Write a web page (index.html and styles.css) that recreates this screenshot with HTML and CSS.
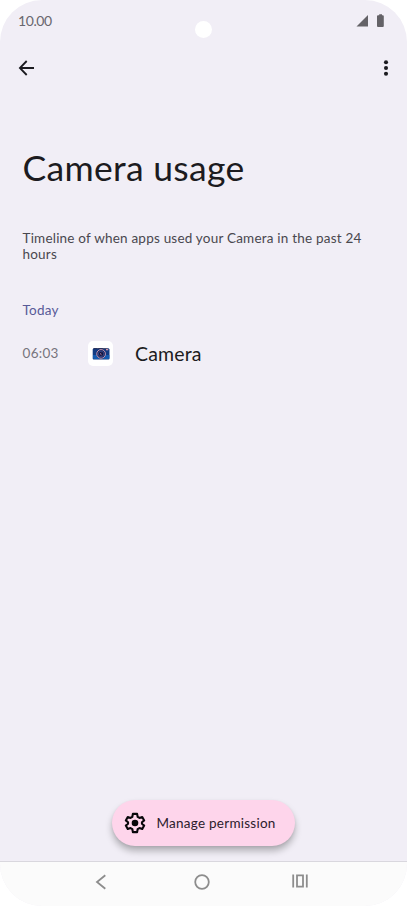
FILE: index.html
```html
<!DOCTYPE html>
<html lang="en">
<head>
<meta charset="utf-8">
<title>Camera usage</title>
<link rel="stylesheet" href="styles.css">
</head>
<body>
<div class="phone">
  <div class="punch-hole"></div>
  <header class="status">
    <span class="clock">10.00</span>
    <svg class="status-icons" width="30" height="14" viewBox="0 0 30 14" fill="#646267"><path d="M12 1v11.500H.5z"/><path d="M23.2 1.200V.3h2.800v.9h.8q1 0 1 1v9.800q0 1-1 1h-4.800q-1 0-1-1V2.200q0-1 1-1z"/></svg>
  </header>
  <nav class="appbar">
    <svg width="18" height="18" viewBox="0 0 18 18" fill="none" stroke="#1c1b20" stroke-width="1.8"><path d="M16 9H2.300M8.700 2 1.900 9l6.800 7"/></svg>
    <svg width="6" height="18" viewBox="0 0 6 18" fill="#1c1b20"><circle cx="3" cy="3.300" r="2.050"/><circle cx="3" cy="9" r="2.050"/><circle cx="3" cy="14.700" r="2.050"/></svg>
  </nav>
  <main class="content">
    <h1 class="title">Camera usage</h1>
    <p class="description"><span class="line-one">Timeline of when apps used your Camera in the past 24</span> <span class="line-two">hours</span></p>
    <h2 class="day">Today</h2>
    <div class="entry">
      <time class="time">06:03</time>
      <span class="app-icon">
        <svg width="18" height="14" viewBox="0 0 18 14"><path d="M.7 2.300 1.700 1.300h3l.8.7L7 1.200h3.400l1 .8H14l.8-.8h1.700l1 1v9.300q0 1-1 1H1.700q-1 0-1-1z" fill="#123b83"/><path d="M1 8h4l3 4H1.700L1 11zM13 8h4.300v3q0 1-1 1H11z" fill="#145bb0"/><path d="M1.500 1.700h14" stroke="#202750"/><circle cx="9.100" cy="6.900" r="4.350" fill="#17245f" stroke="#c796ae"/><circle cx="9.100" cy="6.900" r="2.700" fill="#111641" stroke="#3c5195" stroke-width=".8"/><path d="M9.200 5.800 8.200 7l1.600 1" stroke="#aa7196" stroke-width=".8" fill="none"/><rect x="14" y="1.800" width="2.200" height="1.500" fill="#d399a8"/></svg>
      </span>
      <span class="app-name">Camera</span>
    </div>
  </main>
  <div class="action">
    <button class="manage">
      <svg width="22" height="22" viewBox="0 0 24 24"><path d="M9.700 2h4.600l.6 3.300 2 1.200 3-1 2.100 3.700-2.400 2v1.600l2.400 2-2.100 3.700-3-1-2 1.200-.6 3.300H9.700l-.6-3.300-2-1.200-3 1L2 14.800l2.400-2v-1.600L2 9.200l2.100-3.700 3 1 2-1.200z" fill="none" stroke="#08070a" stroke-width="2.300" stroke-linejoin="round"/><circle cx="12" cy="12" r="3.600" fill="#08070a"/></svg>
      <span class="manage-label">Manage permission</span>
    </button>
  </div>
  <footer class="system-nav">
    <svg width="12" height="16" viewBox="0 0 12 16" fill="none" stroke="#8d8d8d" stroke-width="1.800"><path d="M10.300 1.200 2 8l8.300 6.800"/></svg>
    <svg class="home" width="16" height="16" viewBox="0 0 16 16" fill="none" stroke="#8d8d8d" stroke-width="1.800"><circle cx="8" cy="8" r="6.800"/></svg>
    <svg class="recents" width="16" height="14" viewBox="0 0 16 14" fill="none" stroke="#8d8d8d" stroke-width="1.800"><path d="M1.200.5v13M14.800.5v13M5 1.400h6v11.200H5z"/></svg>
  </footer>
</div>
</body>
</html>
```
FILE: styles.css
```css
* { box-sizing: border-box; }
body { margin: 0; background: #fff; font-family: Lato, sans-serif; }
svg { display: block; flex: none; }
.phone { position: relative; width: 407px; height: 906px; display: flex; flex-direction: column; overflow: hidden; border-radius: 42px; background: #f1eef6; color: #1c1b20; }
.punch-hole { position: absolute; left: 195px; top: 21px; width: 17px; height: 17px; border-radius: 50%; background: #fff; }
.status { height: 42px; padding: 0 21px 0 18px; display: flex; align-items: center; justify-content: space-between; color: #69676e; }
.clock { margin-bottom: 2px; font-size: 14px; letter-spacing: -.4px; }
.status-icons { margin-bottom: 1px; }
.appbar { height: 52px; padding: 0 18px; display: flex; align-items: center; justify-content: space-between; }
.content { flex: 1; padding: 52px 22px 0; }
.title { margin: 0; font-size: 35.5px; line-height: 44px; font-weight: 400; letter-spacing: .3px; white-space: nowrap; }
.description { margin: 40px 0 0; font-size: 13.5px; line-height: 16px; color: #49474e; white-space: nowrap; }
.line-one, .line-two { display: block; letter-spacing: .21px; }
.day { margin: 40px 0 0; font-size: 13.5px; line-height: 17px; font-weight: 400; letter-spacing: .25px; color: #585a98; }
.entry { margin-top: 22px; height: 25px; display: grid; grid-template-columns: 66px 25px 1fr; align-items: center; }
.time { margin-bottom: 2px; font-size: 13.5px; letter-spacing: .3px; color: #77747d; }
.app-icon { width: 25px; height: 25px; border-radius: 5px; background: #fff; display: grid; place-items: center; }
.app-name { padding-left: 22px; font-size: 19.5px; letter-spacing: .15px; }
.title, .description, .day, .time { padding-left: .5px; }
.action { height: 61px; display: flex; justify-content: center; align-items: flex-start; }
.manage { width: 183px; height: 46px; margin-right: 1px; padding: 0 0 0 12px; display: flex; align-items: center; gap: 11px; border: 0; border-radius: 23px; background: #fed5eb; box-shadow: 0 5px 7px #0004, 0 1px 3px #0001; color: #2c202c; font-family: inherit; }
.manage-label { font-size: 13.5px; letter-spacing: .25px; white-space: nowrap; }
.system-nav { height: 45px; padding: 0 99px 5px 95px; border-top: 1px solid #d9d7de; display: flex; align-items: center; justify-content: space-between; background: #fbfbfb; }
.home { margin-left: 4px; }
.recents { margin-bottom: 2px; }
```
